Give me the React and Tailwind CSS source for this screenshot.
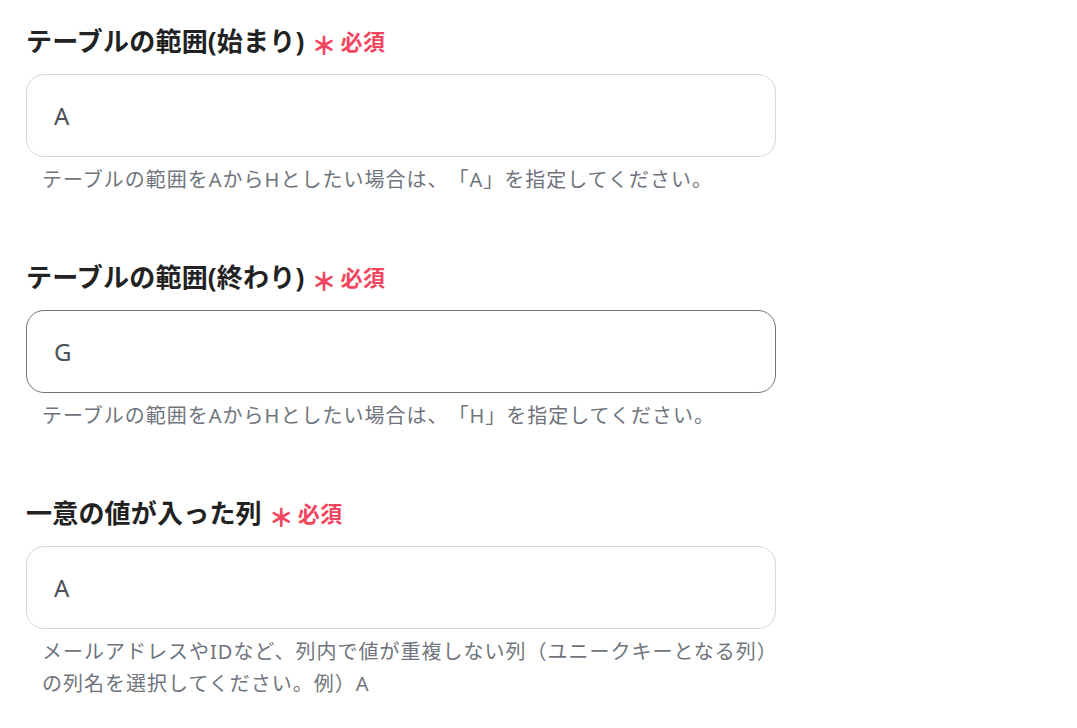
import React from 'react';

const fields = [
  {
    label: 'テーブルの範囲(始まり)',
    value: 'A',
    help: 'テーブルの範囲をAからHとしたい場合は、「A」を指定してください。',
    active: false,
  },
  {
    label: 'テーブルの範囲(終わり)',
    value: 'G',
    help: 'テーブルの範囲をAからHとしたい場合は、「H」を指定してください。',
    active: true,
  },
  {
    label: '一意の値が入った列',
    value: 'A',
    help: 'メールアドレスやIDなど、列内で値が重複しない列（ユニークキーとなる列）の列名を選択してください。例）A',
    active: false,
  },
];

const font = "font-['Noto_Sans','Noto_Sans_CJK_JP',sans-serif]";

const Field = ({ label, value, help, active }) => (
  <div className="flex flex-col">
    <div className="flex items-center h-8">
      <span className="text-[26px] font-bold text-[#222222] tracking-[0.2px] leading-8">{label}</span>
      <span className="ml-[7px] text-[25px] font-black text-[#f2465f] leading-8 translate-y-[4px]">＊</span>
      <span className="ml-[4px] text-[22px] font-bold text-[#f2465f] tracking-[0.5px] leading-8">必須</span>
    </div>
    <div
      className={`mt-[17px] h-[83px] w-[750px] rounded-[18px] border bg-white flex items-center px-[27px] ${
        active ? 'border-[#71757b]' : 'border-[#d4d7dd]'
      }`}
    >
      <span className="text-[24px] text-[#4b5059]">{value}</span>
    </div>
    <p className="mt-[7px] w-[762px] pl-4 text-[20px] leading-8 text-[#6f747c] tracking-[1px] [text-spacing-trim:space-all]">
      {help}
    </p>
  </div>
);

export default function App() {
  return (
    <div className={`min-h-screen bg-white ${font} pl-[26px] pt-[25px]`}>
      <div className="flex flex-col gap-[65px]">
        {fields.map((f) => (
          <Field key={f.label} {...f} />
        ))}
      </div>
    </div>
  );
}
